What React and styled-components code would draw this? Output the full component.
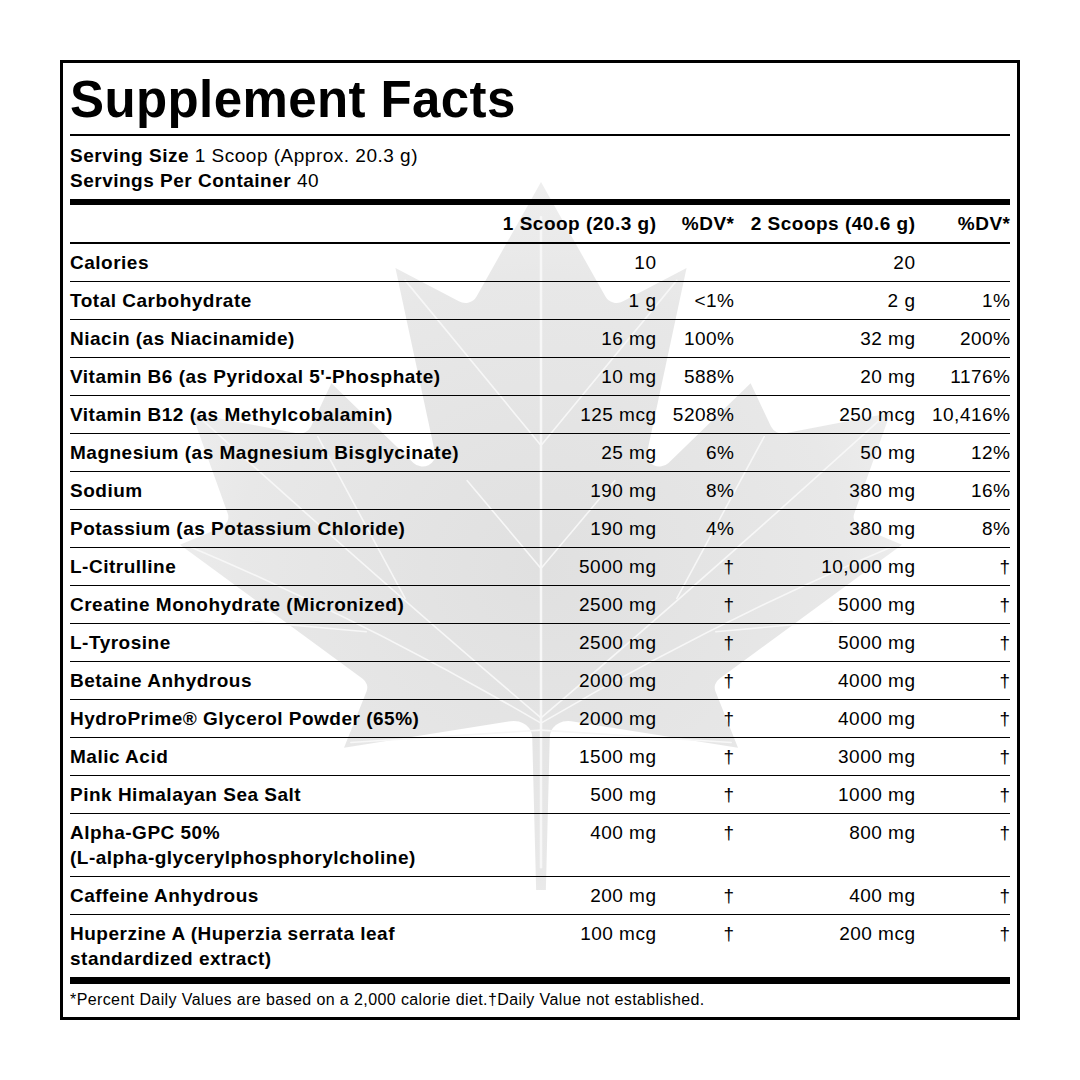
import React from "react";
import styled, { createGlobalStyle } from "styled-components";

const GlobalStyle = createGlobalStyle`
  html, body { margin: 0; padding: 0; background: #fff; }
  body {
    font-family: "Liberation Sans", Arial, Helvetica, sans-serif;
    color: #000;
  }
`;

const Page = styled.div`
  padding: 60px 0 0 60px;
`;

const Card = styled.section`
  position: relative;
  width: 960px;
  box-sizing: border-box;
  border: 3px solid #000;
  padding: 0 7px;
  font-size: 19px;
  letter-spacing: 0.5px;
  background: #fff;
`;

const Watermark = styled.svg`
  position: absolute;
  left: 117px;
  top: 119px;
  width: 722px;
  height: 708px;
  z-index: 0;
  pointer-events: none;
`;

const Content = styled.div`
  position: relative;
  z-index: 1;
`;

const Title = styled.h1`
  margin: 0;
  padding: 7px 0 4px;
  font-size: 51px;
  line-height: 60px;
  font-weight: 700;
  letter-spacing: 0.4px;
  border-bottom: 2px solid #000;
`;

const Serving = styled.div`
  padding: 7px 0 6px;
  line-height: 25px;
  border-bottom: 6px solid #000;
`;

const Label = styled.span`
  font-weight: 700;
`;

const Row = styled.div`
  display: grid;
  grid-template-columns: 430px 156px 78px 181px 95px;
  padding: 6px 0;
  line-height: 25px;
  border-bottom: ${(p) => (p.$head ? "2px" : p.$last ? "0" : "1px")} solid #000;
`;

const Name = styled.div`
  font-weight: 700;
  text-align: left;
`;

const Cell = styled.div`
  text-align: right;
  font-weight: ${(p) => (p.$bold ? 700 : 400)};
  margin-right: -0.5px;
  white-space: nowrap;
`;

const Footer = styled.div`
  border-top: 7px solid #000;
  padding: 6px 0 7px;
  font-size: 16px;
  line-height: 20px;
  letter-spacing: 0.4px;
`;

const rows = [
  ["Calories", "10", "", "20", ""],
  ["Total Carbohydrate", "1 g", "<1%", "2 g", "1%"],
  ["Niacin (as Niacinamide)", "16 mg", "100%", "32 mg", "200%"],
  ["Vitamin B6 (as Pyridoxal 5'-Phosphate)", "10 mg", "588%", "20 mg", "1176%"],
  ["Vitamin B12 (as Methylcobalamin)", "125 mcg", "5208%", "250 mcg", "10,416%"],
  ["Magnesium (as Magnesium Bisglycinate)", "25 mg", "6%", "50 mg", "12%"],
  ["Sodium", "190 mg", "8%", "380 mg", "16%"],
  ["Potassium (as Potassium Chloride)", "190 mg", "4%", "380 mg", "8%"],
  ["L-Citrulline", "5000 mg", "†", "10,000 mg", "†"],
  ["Creatine Monohydrate (Micronized)", "2500 mg", "†", "5000 mg", "†"],
  ["L-Tyrosine", "2500 mg", "†", "5000 mg", "†"],
  ["Betaine Anhydrous", "2000 mg", "†", "4000 mg", "†"],
  ["HydroPrime® Glycerol Powder (65%)", "2000 mg", "†", "4000 mg", "†"],
  ["Malic Acid", "1500 mg", "†", "3000 mg", "†"],
  ["Pink Himalayan Sea Salt", "500 mg", "†", "1000 mg", "†"],
  [["Alpha-GPC 50%", "(L-alpha-glycerylphosphorylcholine)"], "400 mg", "†", "800 mg", "†"],
  ["Caffeine Anhydrous", "200 mg", "†", "400 mg", "†"],
  [["Huperzine A (Huperzia serrata leaf", "standardized extract)"], "100 mcg", "†", "200 mcg", "†"],
];

const LEAF =
  "M25 4030 l20-863 a95 95 0 0 1 111-98 l859 151 -116-320 a65 65 0 0 1 20-73 l941-762 -212-99 a65 65 0 0 1-34-79 l186-572 -542 115 a65 65 0 0 1-73-38 l-105-247 -423 454 a65 65 0 0 1-111-57 l204-1052 -327 189 a65 65 0 0 1-91-27 l-332-652 -332 652 a65 65 0 0 1-91 27 l-327-189 204 1052 a65 65 0 0 1-111 57 l-423-454 -105 247 a65 65 0 0 1-73 38 l-542-115 186 572 a65 65 0 0 1-34 79 l-212 99 941 762 a65 65 0 0 1 20 73 l-116 320 859-151 a95 95 0 0 1 111 98 l20 863z";

function MapleLeaf() {
  const veins = [
    "M0 3900 L0 200",
    "M0 3050 Q800 2300 1740 1360",
    "M0 3050 Q-800 2300 -1740 1360",
    "M0 3080 Q900 2500 1800 2080",
    "M0 3080 Q-900 2500 -1800 2080",
    "M0 3120 L980 3190",
    "M0 3120 L-980 3190",
    "M0 1500 L700 560",
    "M0 1500 L-700 560",
    "M0 2200 L380 1700",
    "M0 2200 L-380 1700",
    "M700 2370 L1150 1450",
    "M-700 2370 L-1150 1450",
    "M900 2560 L1500 2500",
    "M-900 2560 L-1500 2500",
  ];
  return (
    <Watermark viewBox="-1860 0 3720 4030" preserveAspectRatio="none" aria-hidden="true">
      <defs>
        <radialGradient id="leafFill" cx="50%" cy="55%" r="60%">
          <stop offset="0%" stopColor="#e0e0e0" />
          <stop offset="70%" stopColor="#e8e8e8" />
          <stop offset="100%" stopColor="#f1f1f1" />
        </radialGradient>
      </defs>
      <path d={LEAF} fill="url(#leafFill)" />
      {veins.map((d, i) => (
        <path
          key={i}
          d={d}
          stroke="#f7f7f7"
          strokeWidth={i === 0 ? 2.5 : 1.6}
          fill="none"
          strokeLinecap="round"
          vectorEffect="non-scaling-stroke"
        />
      ))}
    </Watermark>
  );
}

export default function App() {
  return (
    <Page>
      <GlobalStyle />
      <Card>
        <MapleLeaf />
        <Content>
          <Title>Supplement Facts</Title>
          <Serving>
            <div>
              <Label>Serving Size</Label> 1 Scoop (Approx. 20.3 g)
            </div>
            <div>
              <Label>Servings Per Container</Label> 40
            </div>
          </Serving>
          <Row $head>
            <Name />
            <Cell $bold>1 Scoop (20.3 g)</Cell>
            <Cell $bold>%DV*</Cell>
            <Cell $bold>2 Scoops (40.6 g)</Cell>
            <Cell $bold>%DV*</Cell>
          </Row>
          {rows.map(([name, a, b, c, d], i) => (
            <Row key={i} $last={i === rows.length - 1}>
              <Name>
                {Array.isArray(name) ? (
                  <>
                    {name[0]}
                    <br />
                    {name[1]}
                  </>
                ) : (
                  name
                )}
              </Name>
              <Cell>{a}</Cell>
              <Cell>{b}</Cell>
              <Cell>{c}</Cell>
              <Cell>{d}</Cell>
            </Row>
          ))}
          <Footer>
            *Percent Daily Values are based on a 2,000 calorie diet.†Daily Value not established.
          </Footer>
        </Content>
      </Card>
    </Page>
  );
}
